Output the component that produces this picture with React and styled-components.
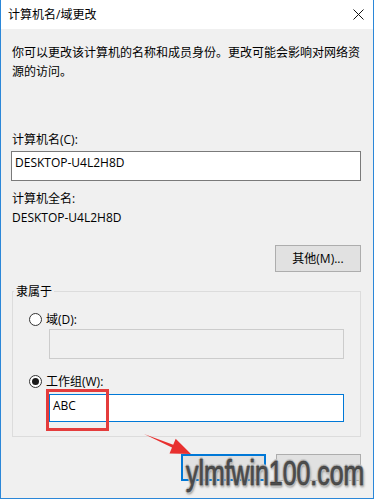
import React from "react";
import styled, { createGlobalStyle } from "styled-components";

const GlobalStyle = createGlobalStyle`
  html, body { margin: 0; padding: 0; background: #ffffff; }
  body { font-family: "Open Sans", "Noto Sans CJK SC", sans-serif; }
  #root { width: 374px; height: 499px; overflow: hidden; }
`;

const Window = styled.div`
  position: relative;
  width: 374px;
  height: 499px;
  box-sizing: border-box;
  border: 1px solid #2b87d8;
  border-top: none;
  display: flex;
  flex-direction: column;
  overflow: hidden;
  font-size: 12px;
  line-height: 19px;
  color: #000;
`;

const TitleBar = styled.div`
  height: 29px;
  flex: none;
  background: #ffffff;
  display: flex;
  align-items: center;
  justify-content: space-between;
  padding: 0 9px 0 7px;
`;

const Title = styled.span`
  font-size: 12px;
  color: #000;
`;

const Body = styled.div`
  flex: 1;
  background: #f0f0f0;
  padding: 14px 12px 0 10px;
  display: flex;
  flex-direction: column;
`;

const Text = styled.div`
  padding-left: 1px;
  margin-top: ${(p) => p.$mt || 0}px;
`;

const Field = styled.div`
  box-sizing: border-box;
  height: ${(p) => p.$h || 30}px;
  margin-top: ${(p) => p.$mt || 0}px;
  margin-left: ${(p) => p.$ml || 0}px;
  padding: 1px 3px 0;
  background: ${(p) => (p.$disabled ? "#f0f0f0" : "#ffffff")};
  border: 1px solid
    ${(p) => (p.$focus ? "#0078d7" : p.$disabled ? "#cccccc" : "#7a7a7a")};
`;

const ButtonRow = styled.div`
  display: flex;
  justify-content: flex-end;
  gap: 10px;
  margin-top: ${(p) => p.$mt || 0}px;
`;

const Button = styled.div`
  box-sizing: border-box;
  width: ${(p) => p.$w || 85}px;
  height: 27px;
  display: flex;
  align-items: center;
  justify-content: center;
  background: #e1e1e1;
  border: ${(p) => (p.$default ? "2px solid #0078d7" : "1px solid #adadad")};
`;

const Group = styled.fieldset`
  margin: 10px 0 0 1px;
  padding: 0 16px 14px 16px;
  border: 1px solid #dcdcdc;
  min-width: 0;
`;

const Legend = styled.legend`
  padding: 0 2px;
  margin-left: -15px;
  line-height: 19px;
`;

const RadioRow = styled.div`
  display: flex;
  align-items: center;
  gap: 4px;
  height: 19px;
  margin-top: ${(p) => p.$mt || 0}px;
`;

const Radio = styled.span`
  box-sizing: border-box;
  width: 13px;
  height: 13px;
  border-radius: 50%;
  border: 1px solid #333333;
  background: #ffffff;
  display: flex;
  align-items: center;
  justify-content: center;
  &::after {
    content: "";
    display: ${(p) => (p.$checked ? "block" : "none")};
    width: 7px;
    height: 7px;
    border-radius: 50%;
    background: #1a1a1a;
  }
`;

const Highlight = styled.div`
  position: absolute;
  left: 45px;
  top: 389px;
  width: 63px;
  height: 42px;
  box-sizing: border-box;
  border: 3px solid #e43c3c;
  pointer-events: none;
`;

const ArrowSvg = styled.svg`
  position: absolute;
  left: 142px;
  top: 432px;
`;

const Watermark = styled.div`
  position: absolute;
  left: 185px;
  top: 455px;
  font-family: "Liberation Sans", Arial, sans-serif;
  font-size: 35px;
  line-height: 35px;
  color: #4d4d4d;
  white-space: nowrap;
  transform: scaleX(0.71);
  transform-origin: left top;
  -webkit-text-stroke: 0.6px #3a3a3a;
  text-shadow: 1px 0 0 #a8a8a8, -1px 0 0 #a8a8a8, 0 1px 0 #a8a8a8,
    0 -1px 0 #a8a8a8, 2px 0 1px #c4c4c4, -2px 0 1px #c4c4c4,
    0 2px 1px #c4c4c4, 0 -2px 1px #c4c4c4, 1px 2px 3px #6a6a6a;
`;

function CloseIcon() {
  return (
    <svg width="11" height="11" viewBox="0 0 11 11">
      <path d="M0.5 0.5 L10.5 10.5 M10.5 0.5 L0.5 10.5" stroke="#111" strokeWidth="1" fill="none" />
    </svg>
  );
}

export default function App() {
  return (
    <>
      <GlobalStyle />
      <Window>
        <TitleBar>
          <Title>计算机名/域更改</Title>
          <CloseIcon />
        </TitleBar>
        <Body>
          <Text>
            你可以更改该计算机的名称和成员身份。更改可能会影响对网络资源的访问。
          </Text>
          <Text $mt={49}>计算机名(C):</Text>
          <Field $mt={2}>DESKTOP-U4L2H8D</Field>
          <Text $mt={8}>计算机全名:</Text>
          <Text>DESKTOP-U4L2H8D</Text>
          <ButtonRow $mt={18}>
            <Button $w={86}>其他(M)...</Button>
          </ButtonRow>
          <Group>
            <Legend>隶属于</Legend>
            <RadioRow $mt={9}>
              <Radio />
              <span>域(D):</span>
            </RadioRow>
            <Field $ml={20} $disabled />
            <RadioRow $mt={13}>
              <Radio $checked />
              <span>工作组(W):</span>
            </RadioRow>
            <Field $ml={20} $mt={3} $h={28} $focus>
              ABC
            </Field>
          </Group>
          <ButtonRow $mt={17}>
            <Button $default />
            <Button />
          </ButtonRow>
        </Body>
        <Highlight />
        <ArrowSvg width="52" height="26" viewBox="143 432 52 26">
          <polygon
            points="144,434 173.2,444.8 175.7,438.8 191,454 169.5,453.6 172,447.6"
            fill="#e8302f"
          />
        </ArrowSvg>
        <Watermark>ylmfwin100.com</Watermark>
      </Window>
    </>
  );
}
